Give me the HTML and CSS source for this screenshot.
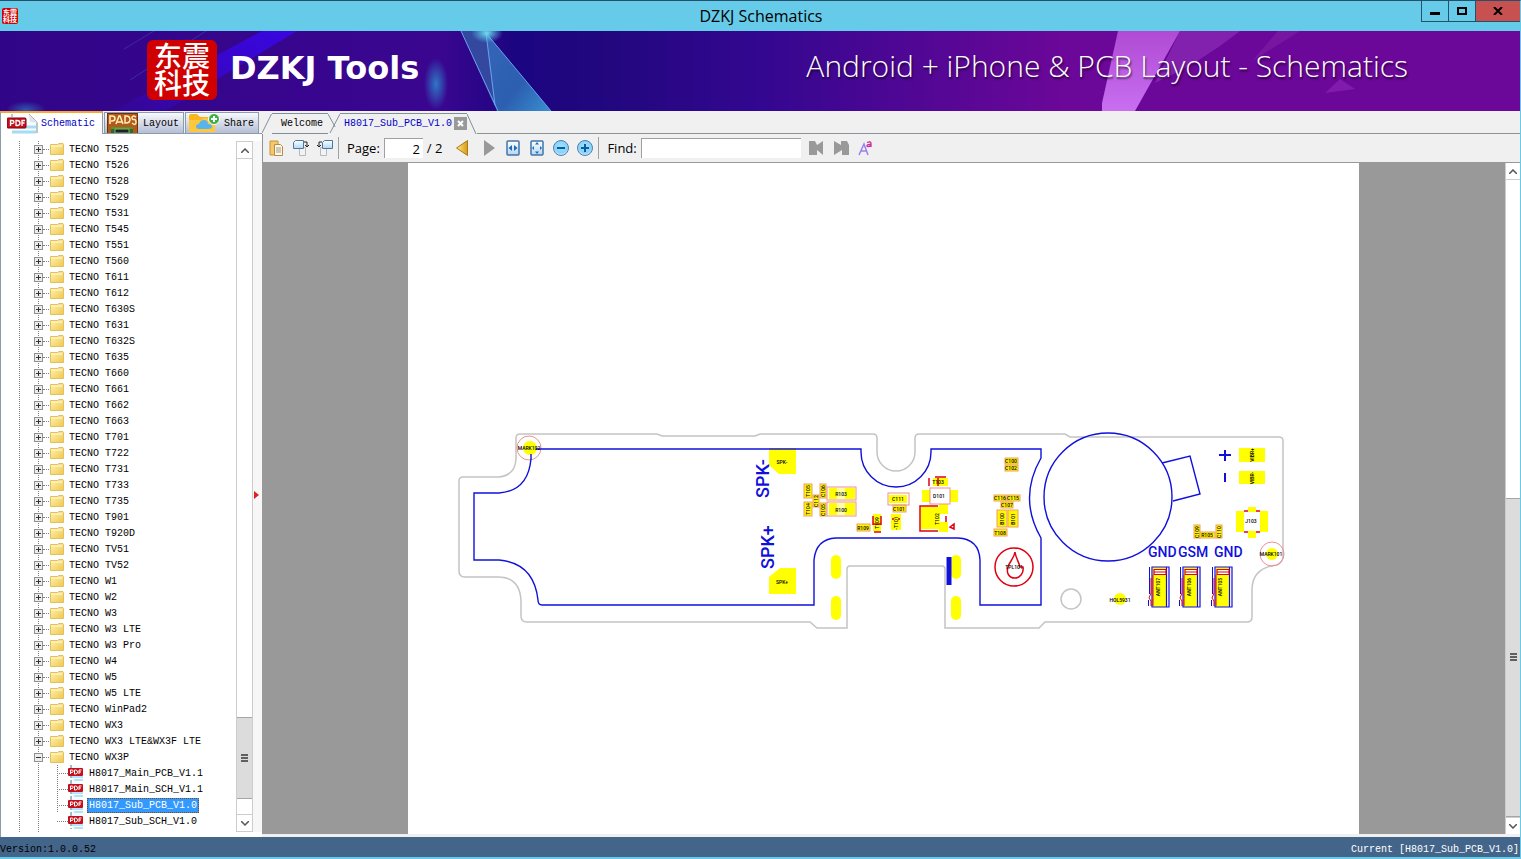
FILE: index.html
```
<!DOCTYPE html>
<html lang="en">
<head>
    <meta charset="UTF-8">
    <meta name="viewport" content="width=device-width, initial-scale=1.0">
    <title>DZKJ Schematics</title>
    <link rel="stylesheet" href="styles.css">
</head>
<body>
    <!-- Shared icons -->
    <svg class="defs" aria-hidden="true">
        <defs>
            <linearGradient id="folder-fill" x1="0" y1="0" x2="1" y2="1">
                <stop offset="0" stop-color="#fff3b0"/>
                <stop offset="1" stop-color="#efc850"/>
            </linearGradient>
            <linearGradient id="gold" x1="0" y1="0" x2="1" y2="0">
                <stop offset="0" stop-color="#ffe98a"/>
                <stop offset="1" stop-color="#d79a14"/>
            </linearGradient>
            <linearGradient id="sheet" x1="0" y1="0" x2="0" y2="1">
                <stop offset="0" stop-color="#ffffff"/>
                <stop offset="1" stop-color="#b5d5f0"/>
            </linearGradient>
            <radialGradient id="ball" cx="0.5" cy="0.4" r="0.6">
                <stop offset="0" stop-color="#9be4ff"/>
                <stop offset="0.7" stop-color="#8bd0f8"/>
                <stop offset="1" stop-color="#d8eefc"/>
            </radialGradient>
            <symbol id="folder" viewBox="0 0 14 12">
                <path d="M.5 1.500h7l1.500-1h4l.5 1v10h-13z" fill="url(#folder-fill)" stroke="#e2c060"/>
                <path d="M1.500 3h11" stroke="#fffbdc"/>
            </symbol>
            <symbol id="pdf" viewBox="0 0 16 16">
                <path d="M3 0h8l4 4v12H3z" fill="#f4fbff"/>
                <path d="M4 12h11M6 15h9" stroke="#9fdcf2" stroke-width="1.500"/>
                <path d="M3 0v16" stroke="#5d7183" stroke-dasharray="3 2"/>
                <rect x="0" y="3" width="15" height="8" rx="1" fill="#c4101c"/>
                <path d="M2.500 9V5h1.500q1.200 0 1.200 1.200T4 7.400H2.500M6.500 9V5h1q2 0 2 2t-2 2zM11 9V5h2.500M11 7h2" fill="none" stroke="#fff"/>
            </symbol>
            <symbol id="ant" viewBox="0 0 22 42">
                <rect x="5" y="1" width="13" height="40" fill="#ffff00"/>
                <path d="M4 1h17v40H4zM18.500 1v40" fill="none" stroke="#1010dd" stroke-width="1.200"/>
                <path d="M1.500 1v27M.5 34v6" stroke="#1010dd"/>
                <path d="M6 3.500h12v5H6zM6 6h12" fill="#fff" stroke="#e00010" stroke-width="1.200"/>
                <path d="M3 12v15l-2 5 2 3v5M5 9v31" fill="none" stroke="#e00010"/>
            </symbol>
        </defs>
    </svg>

    <!-- Title Bar -->
    <header class="titlebar">
        <span class="seal seal-small">东震科技</span>
        <h1>DZKJ Schematics</h1>
        <div class="window-buttons">
            <button class="win-btn" aria-label="Minimize"><svg width="10" height="10"><path d="M0 7.500h10" stroke="#000" stroke-width="3"/></svg></button>
            <button class="win-btn" aria-label="Maximize"><svg width="10" height="8"><rect x="1" y="1" width="8" height="6" fill="none" stroke="#000" stroke-width="2"/></svg></button>
            <button class="win-btn close" aria-label="Close"><svg width="10" height="8"><path d="M1 0l8 8M9 0L1 8" stroke="#000" stroke-width="2"/></svg></button>
        </div>
    </header>

    <!-- Banner -->
    <div class="banner">
        <svg class="banner-art" viewBox="0 31 1520 80" preserveAspectRatio="none" aria-hidden="true">
            <defs>
                <linearGradient id="glass" x1="0" y1="0" x2="1" y2="1">
                    <stop offset="0" stop-color="#3565b8"/>
                    <stop offset="0.600" stop-color="#2c5fb0"/>
                    <stop offset="1" stop-color="#3a8fd0"/>
                </linearGradient>
                <linearGradient id="violet" x1="0" y1="0" x2="0" y2="1">
                    <stop offset="0" stop-color="#b04ad4"/>
                    <stop offset="1" stop-color="#c86ff0"/>
                </linearGradient>
                <radialGradient id="glow">
                    <stop offset="0" stop-color="#2d78c4"/>
                    <stop offset="1" stop-color="#2d78c4" stop-opacity="0"/>
                </radialGradient>
                <radialGradient id="spark">
                    <stop offset="0" stop-color="#6fe0ee"/>
                    <stop offset="1" stop-color="#55c4e8" stop-opacity="0"/>
                </radialGradient>
                <linearGradient id="beam" x1="1" y1="0" x2="0" y2="1">
                    <stop offset="0" stop-color="#3a06e0"/>
                    <stop offset="0.600" stop-color="#3607c0"/>
                    <stop offset="1" stop-color="#3508a8" stop-opacity="0.300"/>
                </linearGradient>
            </defs>
            <path d="M262 31h35L165 111h-52z" fill="url(#beam)"/>
            <path d="M206 31L130 80M154 31l-30 18" stroke="#4a3fb0" stroke-opacity=".6"/>
            <ellipse cx="436" cy="84" rx="12" ry="26" fill="url(#glow)"/>
            <ellipse cx="26" cy="110" rx="20" ry="9" fill="url(#glow)" opacity=".7"/>
            <path d="M461 31h25l9 76z" fill="#34489f"/>
            <path d="M486 33l65 78h-54l-3-7z" fill="url(#glass)"/>
            <path d="M461 31l37 80M486 33l9 72M486 33l65 78" fill="none" stroke="#6aa0f0"/>
            <ellipse cx="487" cy="33" rx="16" ry="10" fill="url(#spark)"/>
            <path d="M1118 31h62l-45 80h-33v-8z" fill="url(#violet)"/>
            <path d="M1180 31h60q-40 32-85 52z" fill="#8a28b4" opacity=".8"/>
            <path d="M1278 31h22l-48 30z" fill="#8428aa" opacity=".5"/>
            <path d="M1340 79l15 10-30 4z" fill="#8a24b6" opacity=".7"/>
        </svg>
        <span class="seal seal-large">东震科技</span>
        <strong class="brand">DZKJ Tools</strong>
        <span class="tagline">Android + iPhone &amp; PCB Layout - Schematics</span>
    </div>

    <main class="workspace">
        <!-- Sidebar -->
        <aside class="sidebar">
            <div class="side-tabs">
                <button class="side-tab active">
                    <svg width="32" height="20" viewBox="0 0 32 20" aria-hidden="true">
                        <path d="M5 0h17l9 8v12H5z" fill="#f8fdff"/>
                        <path d="M5 0v3M22 0l8 8v11" fill="none" stroke="#7e8c94"/>
                        <path d="M22 0l1 8 8 1z" fill="#dfe5e8"/>
                        <path d="M8 13h21M5 18h24" stroke="#a5dcf2" stroke-width="3"/>
                        <rect x="0" y="4" width="19" height="10" rx="1" fill="#c4101c" stroke="#7a0810"/>
                        <path d="M3.500 12V6.500H5q2 0 2 1.500T5 9.500H4M9 12V6.500h1q3 0 3 2.500t-3 2.500H9M15 12V6.500h3M15 9h2.500" fill="none" stroke="#fff" stroke-width="1.300"/>
                    </svg>
                    <span>Schematic</span>
                </button>
                <button class="side-tab">
                    <svg width="32" height="20" viewBox="0 0 32 20" aria-hidden="true">
                        <rect x=".5" y=".5" width="30" height="21" fill="#b55a16" stroke="#6b340c"/>
                        <path d="M4 20v-6h22v6z" fill="#2c6b2c"/>
                        <path d="M8 20v-4h14v4zM4 15h22" fill="#222" stroke="#81b956"/>
                        <path d="M3 11V3h2q3 0 3 2.500T5 8H4M9 11l3-8h1l3 8M10 9h5M18 3v7h1q4 0 4-3.500T19 3zM29 4q-4-2-4 .5t2 2 2 3-4 .5" fill="none" stroke="#ffeec0" stroke-width="1.500"/>
                    </svg>
                    <span>Layout</span>
                </button>
                <button class="side-tab">
                    <svg width="32" height="20" viewBox="0 0 32 20" aria-hidden="true">
                        <path d="M1 19V3q0-2 2-2h6l3 3h13q2 0 2 2v13z" fill="#f8b81c"/>
                        <path d="M1 19V7h12l3-2h11v14z" fill="#ffc83c"/>
                        <path d="M11 16q-3 0-3-2.500T11 11q1-4 5-4t4 4q4 0 4 2.500T20 16z" fill="#58b4f0"/>
                        <circle cx="26" cy="6" r="5.500" fill="#3cb043" stroke="#fff"/>
                        <path d="M26 3v6M23 6h6" stroke="#fff" stroke-width="2"/>
                    </svg>
                    <span>Share</span>
                </button>
            </div>
            <div class="tree-panel">
                <ul class="tree" id="tree"></ul>
                <div class="scrollbar tree-scroll">
                    <button aria-label="Scroll up"><svg width="8" height="5"><path d="M0 5l4-4 4 4" fill="none" stroke="#555" stroke-width="1.500"/></svg></button>
                    <div class="track">
                        <div class="before"></div>
                        <div class="thumb"><i></i><i></i><i></i></div>
                        <div class="after"></div>
                    </div>
                    <button aria-label="Scroll down"><svg width="8" height="5"><path d="M0 0l4 4 4-4" fill="none" stroke="#555" stroke-width="1.500"/></svg></button>
                </div>
                <div class="splitter"><svg width="5" height="8"><path d="M0 0l5 4-5 4z" fill="#e02020"/></svg></div>
            </div>
        </aside>

        <!-- Document -->
        <section class="document">
            <div class="doc-tabs">
                <svg class="slant" width="10" height="22"><path d="M0 20L9.500 1" fill="none" stroke="#7f9099"/></svg>
                <button class="doc-tab">Welcome</button>
                <svg class="slant" width="12" height="22"><path d="M0 1l5 9 2 4M2 20L12 1" fill="none" stroke="#7f9099"/></svg>
                <div class="doc-tab active">
                    <button class="doc-name">H8017_Sub_PCB_V1.0</button>
                    <button class="doc-close" aria-label="Close tab"><svg width="7" height="7"><path d="M1 1l5 5M6 1L1 6" stroke="#fff" stroke-width="2"/></svg></button>
                </div>
                <svg class="slant" width="10" height="22"><path d="M0 1l9 20" fill="none" stroke="#7f9099"/></svg>
                <div class="doc-fill"></div>
            </div>

            <div class="toolbar">
                <button aria-label="Copy"><svg width="16" height="16"><path d="M1 1h8v14H1z" fill="#f5c868" stroke="#c8963a"/><path d="M5.500 4.500h6l2 2v9h-8z" fill="#fff8e4" stroke="#b48c46"/><path d="M7 8h5M7 10h5M7 12h5" stroke="#9b9b9b"/></svg></button>
                <button aria-label="Rotate right"><svg width="16" height="16"><path d="M6.500 7.500h6v8h-6z" fill="#f3f3f3" stroke="#b8b8b8"/><path d="M2.500.5h8v8h-10v-6z" fill="url(#sheet)" stroke="#4779a8"/><path d="M11 2h3v4M12 5l2 2 2-2" fill="none" stroke="#222"/></svg></button>
                <button aria-label="Rotate left"><svg width="16" height="16"><path d="M3.500 7.500h6v8h-6z" fill="#f3f3f3" stroke="#b8b8b8"/><path d="M7.500.5h8v8h-10v-6z" fill="url(#sheet)" stroke="#4779a8"/><path d="M5 2H2v4M0 5l2 2 2-2" fill="none" stroke="#222"/></svg></button>
                <span class="divider"></span>
                <label for="page">Page:</label>
                <input id="page" class="page-input" type="text" value="2">
                <span class="total">/ 2</span>
                <button aria-label="Previous page"><svg width="16" height="16"><path d="M11.500.5v15L.5 8z" fill="url(#gold)" stroke="#ad7b10"/></svg></button>
                <button class="push" aria-label="Next page"><svg width="16" height="16"><path d="M3 0v16l11-8z" fill="#999"/></svg></button>
                <button aria-label="Fit width"><svg width="16" height="16"><rect x="2" y="1" width="12" height="14" rx="1" fill="url(#sheet)" stroke="#3f74aa" stroke-width="1.500"/><path d="M3.500 8L7 5v6zM12.500 8L9 5v6z" fill="#1870b8"/></svg></button>
                <button aria-label="Fit page"><svg width="16" height="16"><rect x="2" y="1" width="12" height="14" rx="1" fill="url(#sheet)" stroke="#3f74aa" stroke-width="1.500"/><path d="M8 2l2 2.500H6zM8 14l2-2.500H6zM3 8l2-2v4zM13 8l-2-2v4z" fill="#1870b8"/></svg></button>
                <button aria-label="Zoom out"><svg width="16" height="16"><circle cx="8" cy="8" r="7.500" fill="url(#ball)" stroke="#4a80b0"/><path d="M4 8h8" stroke="#0a5c9c" stroke-width="2"/></svg></button>
                <button aria-label="Zoom in"><svg width="16" height="16"><circle cx="8" cy="8" r="7.500" fill="url(#ball)" stroke="#4a80b0"/><path d="M4 8h8M8 4v8" stroke="#0a5c9c" stroke-width="2"/></svg></button>
                <span class="divider find-divider"></span>
                <label for="find">Find:</label>
                <input id="find" class="find-input" type="text">
                <button aria-label="Find previous"><svg width="16" height="16"><path d="M0 1h6l2 4 6-4v14L8 10v5H0z" fill="#999"/></svg></button>
                <button class="push" aria-label="Find next"><svg width="16" height="16"><path d="M0 1l7 4V1h6l2 4v10H8v-5l-8 5z" fill="#999"/></svg></button>
                <button aria-label="Match case"><svg width="16" height="16"><path d="M1 15L6 4l4 11M3 11h6" fill="none" stroke="#9a80f0" stroke-width="1.500"/><path d="M9 2.500q4-1.500 4 1v3.500M13 4.500q-4-.5-4 1.200t4 0" fill="none" stroke="#c8309c" stroke-width="1.300"/></svg></button>
            </div>

            <div class="viewer">
                <div class="page">
                    <svg class="board" viewBox="408 163 951 671">
                        <!-- board outline -->
                        <g class="outline">
                            <path d="M520 434H657l5 2H755l5-2H873q4 0 4 4V452A19 19 0 0 0 915 452V438q0-4 4-4H1065l5 3H1279q4 0 4 4V556Q1283 562 1277 565Q1252 568 1252 590V617q0 5-5 5H1045l-6 6H945V569q0-3-3-3H850q-3 0-3 3V628H817l-7-6H527q-6 0-6-6V601Q520 577 498 577H465q-6 0-6-6V481q0-4 4-4H498Q515 476 516 459V438q0-4 4-4z"/>
                            <circle cx="1071" cy="599" r="10"/>
                        </g>

                        <!-- pads -->
                        <g class="pad">
                            <path d="M769 448h27v26h-17l-10-9zM780 568h16v26h-27v-17z"/>
                            <rect x="831" y="555" width="10" height="24" rx="5"/>
                            <rect x="831" y="596" width="10" height="24" rx="5"/>
                            <rect x="951" y="555" width="10" height="24" rx="5"/>
                            <rect x="951" y="596" width="10" height="24" rx="5"/>
                            <circle cx="530" cy="448" r="7"/>
                            <circle cx="1272" cy="554" r="6"/>
                            <circle cx="1120" cy="599" r="6"/>
                            <rect x="1239" y="448" width="26" height="14"/>
                            <rect x="1239" y="471" width="26" height="13"/>
                            <path d="M1236 511h8v21h-8zM1260 511h8v21h-8zM1248 507h8v5h-8zM1248 531h8v7h-8z"/>
                            <path d="M829 488h8v11h-8zM845 488h10v11h-10zM829 503h8v12h-8zM845 503h10v12h-10z"/>
                            <path d="M889 495h18v8h-18zM873 514h8v17h-8zM891 514h10v16h-10z"/>
                            <path d="M933 478h15v8h-15zM922 490h8v12h-8zM950 490h8v12h-8zM921 507h19v22h-19zM939 504h9v10h-9zM939 522h9v10h-9z"/>
                        </g>
                        <path class="pale" d="M837 488h8v11h-8zM837 503h8v12h-8z"/>

                        <!-- small parts -->
                        <g class="part">
                            <rect x="804" y="484" width="8" height="14"/>
                            <rect x="804" y="502" width="8" height="14"/>
                            <rect x="813" y="495" width="6" height="12"/>
                            <rect x="820" y="484" width="6" height="14"/>
                            <rect x="820" y="503" width="6" height="13"/>
                            <rect x="857" y="524" width="13" height="7"/>
                            <rect x="893" y="505" width="13" height="7"/>
                            <rect x="1005" y="458" width="13" height="6"/>
                            <rect x="1005" y="465" width="13" height="6"/>
                            <rect x="994" y="495" width="12" height="6"/>
                            <rect x="1007" y="495" width="13" height="6"/>
                            <rect x="1001" y="502" width="12" height="6"/>
                            <rect x="997" y="510" width="10" height="17"/>
                            <rect x="1008" y="510" width="10" height="17"/>
                            <rect x="994" y="529" width="13" height="7"/>
                            <rect x="1194" y="525" width="6" height="13"/>
                            <rect x="1200" y="532" width="15" height="6"/>
                            <rect x="1216" y="525" width="6" height="13"/>
                        </g>
                        <g class="frame">
                            <rect x="827" y="487" width="29" height="13"/>
                            <rect x="827" y="502" width="29" height="14"/>
                            <rect x="888" y="493" width="21" height="12"/>
                            <rect x="930" y="488" width="20" height="16" fill="#fff"/>
                            <circle cx="529" cy="448" r="12"/>
                            <circle cx="1272" cy="554" r="12"/>
                        </g>
                        <g class="red">
                            <path d="M929 478v8M935 477h11M938 478v8M873 516v9M881 516v9M873 524h8M874 532h7"/>
                            <path d="M938 506h-18v25h18M946 516v6M950 527l4-3v5zM1244 511h4M1256 511h4M1244 532h4M1256 532h4M893 518v2M899 518v2"/>
                            <circle cx="1014" cy="567" r="19"/>
                            <path d="M1015 552C1016 559 1019 562 1020 567H1023C1024 573 1020 578 1015 578C1009 578 1006 573 1008 567C1009 562 1014 559 1015 552z"/>
                        </g>

                        <!-- blue silkscreen -->
                        <g class="blue">
                            <path d="M531 454V459Q528 491 499 493H474V560H499Q534 563 538 600q0 5 4 5H814V560Q816 539 836 538H958Q979 539 980 560V605H1041V538Q1018 498 1041 458V449H931V452A35 35 0 0 1 861 452V449H536"/>
                            <circle cx="1108" cy="497" r="64"/>
                            <path d="M1162 463l28-7 10 38-27 7"/>
                            <path class="bold" d="M1219 455h12M1225 450v11M1225 473v9"/>
                            <path class="bar" d="M949 557v28"/>
                        </g>
                        <use href="#ant" x="1148" y="566" width="22" height="42"/>
                        <use href="#ant" x="1179" y="566" width="22" height="42"/>
                        <use href="#ant" x="1211" y="566" width="22" height="42"/>

                        <g class="net">
                            <text x="1148" y="557">GND</text>
                            <text x="1178" y="557">GSM</text>
                            <text x="1214" y="557">GND</text>
                            <text class="speaker" transform="translate(769 498) rotate(-90)">SPK-</text>
                            <text class="speaker" transform="translate(774 569) rotate(-90)">SPK+</text>
                        </g>
                        <g class="ref" id="refs"></g>
                    </svg>
                </div>
                <div class="scrollbar view-scroll">
                    <button aria-label="Scroll up"><svg width="8" height="5"><path d="M0 5l4-4 4 4" fill="none" stroke="#555" stroke-width="1.500"/></svg></button>
                    <div class="track">
                        <div class="before"></div>
                        <div class="thumb"><i></i><i></i><i></i></div>
                    </div>
                    <button aria-label="Scroll down"><svg width="8" height="5"><path d="M0 0l4 4 4-4" fill="none" stroke="#555" stroke-width="1.500"/></svg></button>
                </div>
            </div>
        </section>
    </main>

    <!-- Status Bar -->
    <footer class="statusbar">
        <span>Version:1.0.0.52</span>
        <span class="current">Current [H8017_Sub_PCB_V1.0]</span>
    </footer>

    <script>
        const models = [
            "T525", "T526", "T528", "T529", "T531", "T545", "T551", "T560", "T611", "T612",
            "T630S", "T631", "T632S", "T635", "T660", "T661", "T662", "T663", "T701", "T722",
            "T731", "T733", "T735", "T901", "T920D", "TV51", "TV52", "W1", "W2", "W3",
            "W3 LTE", "W3 Pro", "W4", "W5", "W5 LTE", "WinPad2", "WX3", "WX3 LTE&amp;WX3F LTE", "WX3P"
        ];
        const files = ["H8017_Main_PCB_V1.1", "H8017_Main_SCH_V1.1", "H8017_Sub_PCB_V1.0", "H8017_Sub_SCH_V1.0"];
        const openModel = "WX3P";
        const openFile = "H8017_Sub_PCB_V1.0";

        function fileRow(name) {
            return `<li class="file"><svg width="16" height="16"><use href="#pdf"/></svg><button class="${name === openFile ? "selected" : ""}">${name}</button></li>`;
        }

        function folderRow(name) {
            const open = name === openModel;
            return `<li><div class="row">
                <button class="expander ${open ? "open" : ""}" aria-label="Toggle folder"></button>
                <svg class="folder" width="14" height="12"><use href="#folder"/></svg>
                <span>TECNO ${name}</span></div>
                ${open ? "<ul>" + files.map(fileRow).join("") + "</ul>" : ""}</li>`;
        }

        document.getElementById("tree").innerHTML = models.map(folderRow).join("");

        // label, centre x, centre y, vertical
        const refs = [
            ["MARK102", 529, 448], ["SPK-", 782, 462], ["SPK+", 782, 582],
            ["T105", 808, 491, 1], ["T104", 808, 509, 1], ["C112", 816, 501, 1],
            ["C106", 823, 491, 1], ["C105", 823, 510, 1], ["R103", 841, 494], ["R100", 841, 510],
            ["R109", 863, 528], ["T109", 877, 523, 1], ["-T101", 896, 523, 1],
            ["C111", 898, 499], ["C101", 899, 509], ["T103", 938, 482], ["D101", 939, 496],
            ["T102", 937, 519, 1], ["C100", 1011, 461], ["C102", 1011, 468],
            ["C116", 1000, 498], ["C115", 1013, 498], ["C107", 1007, 505],
            ["B100", 1002, 519, 1], ["B101", 1013, 519, 1], ["T108", 1000, 533], ["TPL101", 1014, 567],
            ["VIBR+", 1252, 455, 1], ["VIBR-", 1252, 478, 1], ["J103", 1251, 521],
            ["C109", 1197, 532, 1], ["R105", 1207, 535], ["C110", 1219, 532, 1],
            ["MARK101", 1271, 554], ["HOL5931", 1120, 600],
            ["ANT107", 1158, 587, 1], ["ANT106", 1189, 587, 1], ["ANT105", 1220, 587, 1]
        ];

        document.getElementById("refs").innerHTML = refs
            .map(([name, x, y, vertical]) => `<text transform="translate(${x} ${y})${vertical ? " rotate(-90)" : ""}" y="2">${name}</text>`)
            .join("");
    </script>
</body>
</html>
```
FILE: styles.css
```
* {
    box-sizing: border-box;
}

body {
    margin: 0;
    height: 100vh;
    display: flex;
    flex-direction: column;
    overflow: hidden;
    font-family: "Liberation Mono", monospace;
    font-size: 10px;
    color: #000;
    background: #65cbe9;
    border-top: 1px solid #24506a;
    border-right: 1px solid #65cbe9;
}

button {
    margin: 0;
    padding: 0;
    border: none;
    background: none;
    font: inherit;
    color: inherit;
    display: flex;
    align-items: center;
    justify-content: center;
}

svg {
    display: block;
    flex: none;
}

.defs {
    position: absolute;
    width: 0;
    height: 0;
}

/* Title bar */
.titlebar {
    flex: none;
    height: 30px;
    display: grid;
    grid-template-columns: 1fr auto 1fr;
    align-items: center;
    padding-left: 2px;
}

.titlebar h1 {
    margin: 0;
    font-family: "Open Sans", sans-serif;
    font-size: 16px;
    font-weight: normal;
}

.seal {
    font-family: "Noto Sans CJK SC", sans-serif;
    font-weight: bold;
    color: #fff;
    background: #d00000;
    overflow-wrap: anywhere;
}

.seal-small {
    width: 16px;
    height: 16px;
    border-radius: 2px;
    font-size: 7px;
    line-height: 7px;
    padding: 1px;
}

.window-buttons {
    display: flex;
    align-self: start;
    justify-self: end;
}

.win-btn {
    width: 27px;
    height: 21px;
    border: 1px solid #24506a;
    border-top: none;
    border-right: none;
}

.win-btn.close {
    width: 45px;
    background: #c75050;
}

/* Banner */
.banner {
    flex: none;
    position: relative;
    height: 80px;
    display: flex;
    align-items: center;
    padding: 0 112px 2px 147px;
    color: #fff;
    background: linear-gradient(90deg, #310588 0%, #3a0690 29%, #1b0580 34%, #22077f 40%, #330790 50%, #560795 62%, #6b0799 70%, #6b0799 100%);
    font-family: "Open Sans", sans-serif;
}

.banner-art {
    position: absolute;
    inset: 0;
    width: 100%;
    height: 100%;
}

.seal-large {
    position: relative;
    width: 70px;
    height: 60px;
    border-radius: 6px;
    padding: 2px 7px;
    font-size: 28px;
    font-weight: 500;
    line-height: 27px;
}

.brand {
    position: relative;
    margin-left: 13px;
    padding-bottom: 4px;
    font-family: "DejaVu Sans", sans-serif;
    font-size: 32px;
}

.tagline {
    position: relative;
    margin-left: auto;
    padding-bottom: 10px;
    font-size: 30px;
    font-weight: 300;
    text-shadow: 1px 2px 2px rgba(0, 0, 0, 0.6);
}

/* Workspace */
.workspace {
    flex: 1;
    min-height: 0;
    display: flex;
    background: #f0f0f0;
}

.sidebar {
    flex: none;
    width: 262px;
    display: flex;
    flex-direction: column;
}

.side-tabs {
    flex: none;
    height: 23px;
    display: flex;
    align-items: flex-end;
    border-bottom: 1px solid #8c9cab;
}

.side-tab {
    height: 21px;
    gap: 4px;
    padding: 0 4px 0 2px;
    margin-right: 1px;
    border: 1px solid #8c9cab;
    border-bottom: none;
    background: linear-gradient(#f8f9fc, #b4bed6);
    overflow: hidden;
}

.side-tab.active {
    height: 23px;
    margin-bottom: -1px;
    padding: 0 7px 0 6px;
    gap: 2px;
    color: #0000c8;
    background: #fff;
    border-top: 2px solid #f8a830;
}

.tree-panel {
    flex: 1;
    min-height: 0;
    display: flex;
    padding: 7px 0 5px;
    background: #fff;
    border-left: 1px solid #8c9cab;
}

.tree {
    flex: 1;
    margin: 0;
    padding: 0;
    overflow: hidden;
    list-style: none;
    background:
        linear-gradient(#808080 50%, transparent 50%) 18px 0 / 1px 2px repeat-y,
        linear-gradient(#808080 50%, transparent 50%) 37px 0 / 1px 2px repeat-y;
}

.row {
    height: 16px;
    display: flex;
    align-items: center;
    padding-left: 33px;
}

.row span {
    margin-left: 5px;
}

.expander {
    width: 9px;
    height: 9px;
    border: 1px solid #919191;
    background: linear-gradient(#333, #333) center / 5px 1px no-repeat, linear-gradient(#333, #333) center / 1px 5px no-repeat, #ececec;
}

.expander.open {
    background: linear-gradient(#333, #333) center / 5px 1px no-repeat, #ececec;
}

.row::before {
    content: "";
    order: 1;
    width: 6px;
    margin-right: 1px;
    border-top: 1px dotted #808080;
}

.folder,
.row span {
    order: 2;
}

.tree ul {
    margin: 0;
    padding: 0 0 0 56px;
    list-style: none;
}

.file {
    height: 16px;
    display: flex;
    align-items: center;
    background: linear-gradient(#808080 50%, transparent 50%) 0 0 / 1px 2px repeat-y;
}

.file:last-child {
    background: none;
}

.file::before {
    content: "";
    width: 11px;
    border-top: 1px dotted #808080;
}

.file button {
    height: 15px;
    margin-left: 3px;
    padding: 0 1px;
    border: 1px dotted transparent;
}

.file .selected {
    color: #fff;
    background: #3399ff;
    border-color: #7a4a10;
}

.splitter {
    flex: none;
    width: 9px;
    display: flex;
    align-items: center;
    padding: 16px 0 0 1px;
    background: #f7f7f7;
}

/* Scrollbars */
.scrollbar {
    flex: none;
    width: 17px;
    display: flex;
    flex-direction: column;
    background: #fff;
    border: 1px solid #cdcdcd;
}

.scrollbar button {
    flex: none;
    height: 16px;
}

.track {
    flex: 1;
    display: flex;
    flex-direction: column;
    border: solid #cdcdcd;
    border-width: 1px 0;
}

.thumb {
    display: flex;
    flex-direction: column;
    align-items: center;
    justify-content: center;
    gap: 1px;
    background: #dcdcdc;
    border: solid #a6a6a6;
    border-width: 1px 0;
}

.thumb i {
    width: 7px;
    height: 2px;
    background: #606060;
}

.tree-scroll .before {
    flex: 561;
}

.tree-scroll .thumb {
    flex: 81;
}

.tree-scroll .after {
    flex: 15;
}

.view-scroll {
    width: 15px;
    border-width: 0 0 0 1px;
}

.view-scroll .before,
.view-scroll .thumb {
    flex: 1;
}

/* Document tabs */
.document {
    flex: 1;
    min-width: 0;
    display: flex;
    flex-direction: column;
    padding-bottom: 3px;
}

.doc-tabs {
    flex: none;
    height: 23px;
    display: flex;
    align-items: flex-end;
}

.slant {
    height: 21px;
}

.doc-tab {
    height: 21px;
    padding: 0 5px 0 9px;
    border: solid #7f9099;
    border-width: 1px 0;
}

.doc-tab.active {
    display: flex;
    align-items: center;
    gap: 2px;
    padding: 0 0 0 4px;
    border-bottom-color: transparent;
    color: #0000c8;
}

.doc-close {
    width: 13px;
    height: 13px;
    background: #999;
}

.doc-fill {
    flex: 1;
    border-bottom: 1px solid #8c9499;
}

/* Toolbar */
.toolbar {
    flex: none;
    height: 28px;
    display: flex;
    align-items: center;
    gap: 8px;
    padding: 0 6px;
    border-left: 1px solid #8c9499;
    font-family: "Open Sans", sans-serif;
    font-size: 13px;
}

.divider {
    width: 1px;
    height: 22px;
    margin-left: -3px;
    background: #a0a0a0;
}

.toolbar input {
    height: 20px;
    padding: 0 3px;
    border: solid #a0a0a0;
    border-width: 1px 0 0 1px;
    background: #fff;
    font: inherit;
}

.page-input {
    width: 39px;
    margin-left: -4px;
    text-align: right;
}

.total {
    margin: 0 6px 0 -4px;
}

.push {
    margin-left: 1px;
}

.find-input {
    width: 160px;
    margin-left: -4px;
}

/* Viewer */
.viewer {
    flex: 1;
    min-height: 0;
    display: flex;
    background: #999;
    border-top: 1px solid #999;
}

.page {
    flex: 1;
    min-width: 0;
    margin: 0 146px;
    background: #fff;
}

.board {
    width: 100%;
    height: 100%;
}

.outline {
    fill: none;
    stroke: #c4c4c4;
    stroke-width: 1.5;
}

.pad {
    fill: #ffff00;
}

.pale {
    fill: #ffffa8;
}

.part {
    fill: #fff600;
    stroke: #f0a060;
}

.frame {
    fill: none;
    stroke: #f09090;
}

.red {
    fill: none;
    stroke: #e00010;
    stroke-width: 1.5;
}

.blue {
    fill: none;
    stroke: #1010dd;
    stroke-width: 1.4;
}

.blue .bold {
    stroke-width: 2;
}

.blue .bar {
    stroke-width: 5;
}

.net {
    fill: #1010dd;
    font-family: Roboto, sans-serif;
    font-size: 14px;
    font-weight: 500;
}

.net .speaker {
    font-size: 18px;
}

.ref {
    fill: #000;
    font-family: Roboto, sans-serif;
    font-size: 5px;
    font-weight: 500;
    text-anchor: middle;
}

/* Status bar */
.statusbar {
    flex: none;
    height: 20px;
    margin-bottom: 2px;
    display: flex;
    align-items: flex-end;
    justify-content: space-between;
    padding: 0 1px 2px 0;
    background: #44658a;
}

.current {
    color: #fff;
}
```
